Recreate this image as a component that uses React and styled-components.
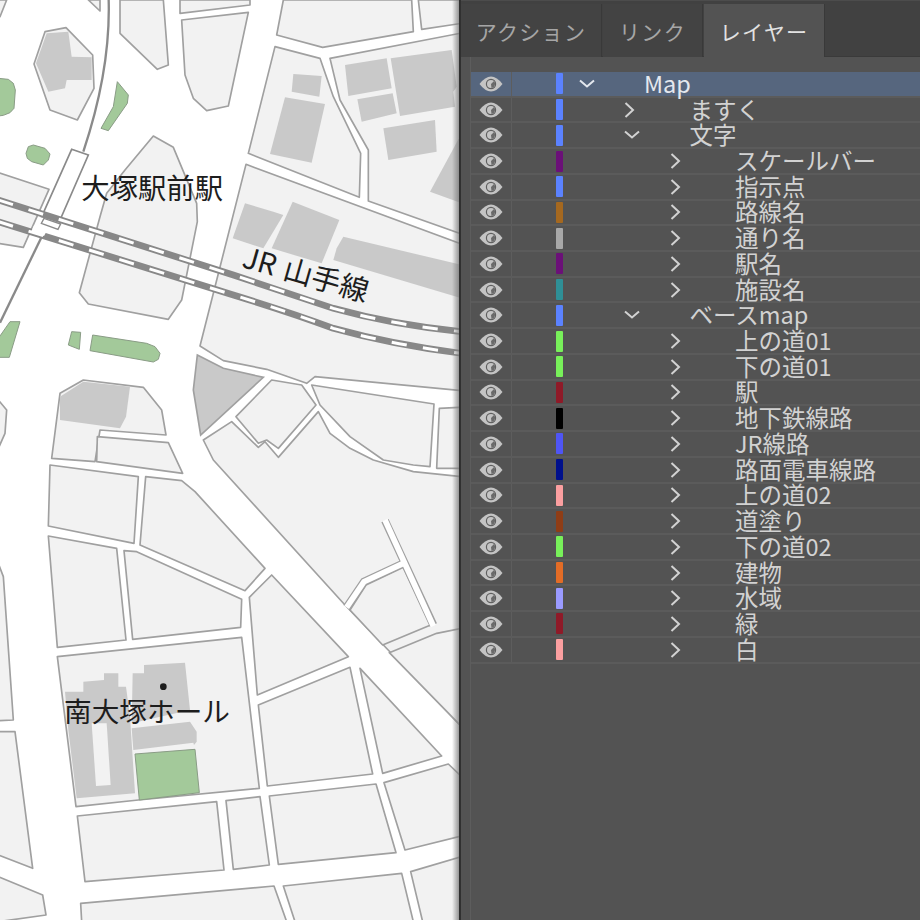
import React from "react";
import styled, { createGlobalStyle } from "styled-components";

// レイヤーパネルの行データ
const layers = [
  { name: "Map", depth: 0, color: "#5b82ff", open: true, selected: true },
  { name: "ますく", depth: 1, color: "#5b82ff" },
  { name: "文字", depth: 1, color: "#5b82ff", open: true },
  { name: "スケールバー", depth: 2, color: "#6b1078" },
  { name: "指示点", depth: 2, color: "#5b82ff" },
  { name: "路線名", depth: 2, color: "#a5681f" },
  { name: "通り名", depth: 2, color: "#a8a8a8" },
  { name: "駅名", depth: 2, color: "#6b1078" },
  { name: "施設名", depth: 2, color: "#2f8f96" },
  { name: "ベースmap", depth: 1, color: "#5b82ff", open: true },
  { name: "上の道01", depth: 2, color: "#78f05a" },
  { name: "下の道01", depth: 2, color: "#78f05a" },
  { name: "駅", depth: 2, color: "#8f1a28" },
  { name: "地下鉄線路", depth: 2, color: "#000000" },
  { name: "JR線路", depth: 2, color: "#4f55f5" },
  { name: "路面電車線路", depth: 2, color: "#00108c" },
  { name: "上の道02", depth: 2, color: "#fb9fa0" },
  { name: "道塗り", depth: 2, color: "#8f3d16" },
  { name: "下の道02", depth: 2, color: "#78f05a" },
  { name: "建物", depth: 2, color: "#e36c26" },
  { name: "水域", depth: 2, color: "#9a9aff" },
  { name: "緑", depth: 2, color: "#8f1a28" },
  { name: "白", depth: 2, color: "#fb9fa0" },
];

// 地図の座標は 3倍スケール (1380 x 2760)
const blocks = [
  "265,0 300,33 300,0",
  "0,50 20,0 -5,0 -5,50",
  "135,95 198,83 278,165 282,265 232,360 150,330 102,192",
  "360,0 490,0 505,195 472,208 360,100",
  "545,60 745,37 685,318 620,332 580,295 555,225",
  "540,0 750,0 750,15 540,40",
  "850,0 1235,0 1240,95 968,142 830,105",
  "825,140 960,175 1000,290 1082,460 1078,592 745,460",
  "990,175 1380,100 1385,100 1385,702 1105,603 1105,450 1020,300",
  "1255,0 1385,0 1385,70 1265,88",
  "460,408 520,442 590,610 592,665 545,900 505,958 265,912 238,878 300,650 320,580 375,510",
  "-5,518 147,568 70,742 -5,730",
  "738,493 1385,732 1385,1172 945,1130 920,1150 800,1108 670,1082 600,1038",
  "815,1140 905,1155 948,1215 835,1345 800,1320 775,1330 708,1250",
  "610,1320 695,1265 775,1342 795,1325 835,1372 955,1235 990,1300 1050,1345 1120,1380 1240,1415 1385,1430 1385,2180 1035,1815 640,1380 625,1350",
  "935,1155 1302,1212 1290,1400 1240,1395 1150,1380 1050,1310 960,1215",
  "1318,1225 1385,1222 1385,1405 1310,1405",
  "180,1180 250,1140 430,1162 485,1230 498,1305 300,1290 285,1385 155,1375",
  "292,1310 505,1328 548,1420 290,1385",
  "-5,1200 20,1230 15,1300 -5,1345",
  "150,1395 415,1430 402,1630 145,1578",
  "437,1430 545,1442 585,1475 795,1705 735,1772 420,1635",
  "145,1608 350,1645 378,1920 172,1942",
  "372,1652 410,1655 725,1798 722,1882 398,1918",
  "172,1970 725,1912 778,2365 415,2400 228,2420",
  "748,1792 815,1725 1045,1970 772,2085",
  "775,2115 1050,2002 1118,2322 802,2358",
  "1080,2005 1325,2268 1148,2320",
  "1050,1830 1098,1755 1210,1702 1292,1875 1148,1935",
  "1168,1958 1310,1900 1385,1885 1385,2180",
  "1152,2348 1345,2292 1385,2330 1385,2508 1215,2550",
  "232,2448 650,2405 672,2610 255,2645",
  "678,2402 780,2390 808,2595 700,2608",
  "808,2388 1128,2352 1188,2558 835,2593",
  "242,2710 822,2658 860,2765 245,2765",
  "850,2658 1205,2620 1240,2765 885,2765",
  "1232,2615 1385,2570 1385,2765 1268,2765",
  "-5,1690 10,1730 40,2160 -5,2162",
  "-5,2195 45,2195 98,2605 -5,2565",
  "-5,2630 128,2685 138,2745 -5,2765",
];

const buildings = [
  "140,100 205,95 215,170 275,172 275,240 200,240 195,265 145,275 108,190",
  "880,222 965,228 958,290 875,275",
  "855,292 975,312 935,488 810,462",
  "1035,195 1160,175 1175,265 1045,288",
  "1172,175 1355,150 1370,260 1360,275 1365,320 1200,348",
  "1072,298 1178,280 1190,340 1085,365",
  "1150,385 1305,360 1310,455 1165,480",
  "1385,400 1290,575 1385,610",
  "735,610 820,635 850,645 790,745 698,715",
  "878,605 1018,660 965,790 815,745",
  "1030,710 1385,795 1385,895 1000,780 1010,745",
  "180,1190 250,1145 390,1160 378,1250 360,1285 180,1260",
  "195,2075 250,2075 250,2045 312,2040 312,2020 355,2020 355,2060 378,2060 390,2150 405,2380 230,2395 205,2190",
  "398,2020 432,2020 432,1995 555,1988 570,2130 395,2170",
  "395,2185 570,2165 590,2195 590,2225 582,2235 580,2228 400,2250",
];

const greens = [
  "-5,235 25,238 40,250 46,270 42,325 30,338 10,346 -5,348",
  "352,245 385,285 382,310 325,392 303,385 340,320",
  "78,460 85,440 100,435 135,445 150,462 145,480 130,495 95,485 82,475",
  "60,965 30,965 -5,1015 -5,1072 28,1072",
  "215,995 242,997 238,1048 205,1035",
  "278,1005 440,1030 465,1040 480,1060 475,1078 460,1086 270,1052",
  "405,2262 585,2248 598,2378 418,2400",
];

const track1 = "M-5 600 L700 825 Q880 885 1000 925 Q1180 975 1385 995";
const track2 = "M-5 665 L700 885 Q880 940 1000 985 Q1180 1035 1385 1060";

const GlobalStyle = createGlobalStyle`
  html, body { margin: 0; padding: 0; background: #535353; }
  body { width: 920px; height: 920px; overflow: hidden; }
`;

const Screen = styled.div`
  width: 920px;
  height: 920px;
  display: flex;
  overflow: hidden;
  font-family: "Noto Sans CJK JP", "Noto Sans", sans-serif;
`;

const MapArea = styled.div`
  position: relative;
  width: 459px;
  height: 920px;
  flex: none;
  overflow: hidden;
  background: #fff;
  &::after {
    content: "";
    position: absolute;
    top: 0;
    right: 0;
    bottom: 0;
    width: 7px;
    background: linear-gradient(to right, rgba(120, 120, 120, 0), rgba(120, 120, 120, 0.75));
  }
`;

const MapSvg = styled.svg`
  display: block;
  width: 460px;
  height: 920px;
`;

const MapLabel = styled.text`
  font-family: "Noto Sans CJK JP", sans-serif;
  fill: #1d1d1d;
  font-size: ${(props) => props.$size}px;
  word-spacing: ${(props) => props.$wordGap || 0}px;
`;

const Panel = styled.div`
  flex: 1;
  display: flex;
  flex-direction: column;
  background: #535353;
  border-left: 2px solid #303030;
`;

const TabBar = styled.div`
  height: 57px;
  box-sizing: border-box;
  display: flex;
  gap: 1px;
  padding-top: 3px;
  background: #414141;
  border-top: 1px solid #4c4c4c;
  box-shadow: inset 0 -1px 0 #3a3a3a;
`;

const Tab = styled.div`
  width: ${(props) => props.$width}px;
  box-sizing: border-box;
  display: flex;
  align-items: center;
  justify-content: center;
  font-size: 21px;
  letter-spacing: 1.3px;
  color: ${(props) => (props.$active ? "#e2e2e2" : "#a6a6a6")};
  background: ${(props) => (props.$active ? "#535353" : "#434343")};
  border-right: 1px solid #393939;
`;

const Content = styled.div`
  flex: 1;
  margin: 0 0 0 9px;
  padding-top: 15px;
  border-left: 1px solid #5d5d5d;
`;

const LayerList = styled.div`
  display: flex;
  flex-direction: column;
`;

const Row = styled.div`
  height: 25.72px;
  box-sizing: border-box;
  display: flex;
  align-items: stretch;
  background: ${(props) => (props.$selected ? "#56667e" : "transparent")};
  border-bottom: 2px solid #5b5b5b;
  color: ${(props) => (props.$selected ? "#e4e8ee" : "#d2d2d2")};
`;

const EyeCell = styled.div`
  width: 41px;
  box-sizing: border-box;
  flex: none;
  display: flex;
  align-items: center;
  justify-content: center;
  border-right: 1px solid #5d5d5d;
`;

const LinkCell = styled.div`
  width: 51px;
  box-sizing: border-box;
  flex: none;
  display: flex;
  align-items: center;
  padding-left: 44px;
`;

const Swatch = styled.span`
  width: 7px;
  height: 21px;
  flex: none;
  border-radius: 1px;
  background: ${(props) => props.$color};
`;

const NameCell = styled.div`
  display: flex;
  align-items: center;
  padding-left: ${(props) => 15.5 + props.$depth * 45.5}px;
`;

const ChevronBox = styled.span`
  width: 16px;
  height: 16px;
  flex: none;
  display: flex;
  margin-right: 49.5px;
`;

const LayerName = styled.span`
  display: block;
  height: 22px;
  margin-bottom: 2px;
  font-size: 23.5px;
  line-height: 22px;
  white-space: nowrap;
`;

const EyeIcon = () => (
  <svg width="24" height="16" viewBox="0 0 24 16">
    <path d="M0.5 8 Q12 -7 23.5 8 Q12 23 0.5 8 Z" fill="#c4c4c4" />
    <circle cx="12" cy="8" r="5.2" fill="#5f5f5f" />
    <circle cx="12" cy="8" r="4" fill="#c4c4c4" />
    <path d="M12 8 L15 5 A4.2 4.2 0 0 1 12.5 12 Z" fill="#6a6a6a" />
  </svg>
);

const Chevron = ({ open }) => (
  <svg width="16" height="16" viewBox="0 0 16 16" fill="none" stroke="currentColor" strokeWidth="2">
    <path d={open ? "M1 4.5 L8 10.5 L15 4.5" : "M1.5 1 L9 8 L1.5 15"} />
  </svg>
);

function CityMap() {
  return (
    <MapSvg viewBox="0 0 1380 2760">
      <rect width="1380" height="2760" fill="#fff" />
      <g fill="#f2f2f2" stroke="#a0a0a0" strokeWidth="5" strokeLinejoin="round">
        {blocks.map((points) => (
          <polygon key={points} points={points} />
        ))}
      </g>
      {/* 行き止まりの細い道 */}
      <path d="M1155 1562 L1300 1875 M1210 1690 L1092 1745 L1040 1822" fill="none" stroke="#a0a0a0" strokeWidth="24" />
      <path d="M1155 1560 L1300 1878 M1210 1690 L1092 1745 L1040 1822" fill="none" stroke="#fff" strokeWidth="17" />
      <g fill="#c9c9c9">
        {buildings.map((points) => (
          <polygon key={points} points={points} />
        ))}
      </g>
      <polygon points="592,1065 670,1105 790,1132 602,1305 580,1170" fill="#c9c9c9" stroke="#a0a0a0" strokeWidth="5" />
      <polygon points="275,2170 320,2170 332,2355 288,2358" fill="#f2f2f2" />
      <g fill="#a3c99a" stroke="#8a9c86" strokeWidth="3" strokeLinejoin="round">
        {greens.map((points) => (
          <polygon key={points} points={points} />
        ))}
      </g>
      {/* 路面電車の線路 */}
      <path d="M326 0 Q332 210 250 455" fill="none" stroke="#8a8a8a" strokeWidth="7" />
      <path d="M135 690 L0 968" fill="none" stroke="#8a8a8a" strokeWidth="7" />
      <polygon points="215,448 265,465 180,660 125,650" fill="#fff" stroke="#8a8a8a" strokeWidth="5" />
      <path d={track1} fill="none" stroke="#888" strokeWidth="20" />
      <path d={track1} fill="none" stroke="#fff" strokeWidth="9" strokeDasharray="46 49" />
      <path d={track2} fill="none" stroke="#888" strokeWidth="20" />
      <path d={track2} fill="none" stroke="#fff" strokeWidth="9" strokeDasharray="46 49" />
      <polygon points="132,655 182,672 174,688 124,670" fill="#fff" stroke="#8a8a8a" strokeWidth="4" />
      <polygon points="102,676 142,690 132,708 94,694" fill="#fff" />
      <circle cx="490" cy="2060" r="10" fill="#1d1d1d" />
      <MapLabel x="244" y="596" $size={85}>大塚駅前駅</MapLabel>
      <MapLabel $size={87} $wordGap={6} transform="translate(722 800) rotate(16)">JR 山手線</MapLabel>
      <MapLabel x="192" y="2166" $size={83}>南大塚ホール</MapLabel>
    </MapSvg>
  );
}

export default function App() {
  return (
    <Screen>
      <GlobalStyle />
      <MapArea>
        <CityMap />
      </MapArea>
      <Panel>
        <TabBar>
          <Tab $width={141}>アクション</Tab>
          <Tab $width={100}>リンク</Tab>
          <Tab $width={121} $active>レイヤー</Tab>
        </TabBar>
        <Content>
          <LayerList>
            {layers.map((layer) => (
              <Row key={layer.name} $selected={layer.selected}>
                <EyeCell>
                  <EyeIcon />
                </EyeCell>
                <LinkCell>
                  <Swatch $color={layer.color} />
                </LinkCell>
                <NameCell $depth={layer.depth}>
                  <ChevronBox>
                    <Chevron open={layer.open} />
                  </ChevronBox>
                  <LayerName>{layer.name}</LayerName>
                </NameCell>
              </Row>
            ))}
          </LayerList>
        </Content>
      </Panel>
    </Screen>
  );
}
